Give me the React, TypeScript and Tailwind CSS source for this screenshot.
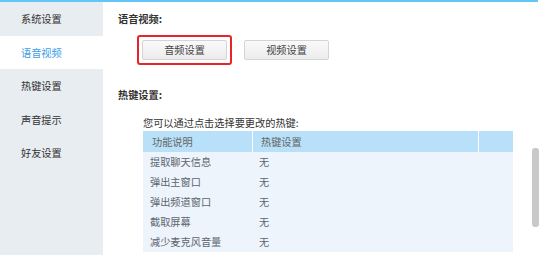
import React from 'react';

const font = { fontFamily: '"Noto Sans CJK SC", "Liberation Sans", sans-serif' };

const menu = ['系统设置', '语音视频', '热键设置', '声音提示', '好友设置'];

const rows = ['提取聊天信息', '弹出主窗口', '弹出频道窗口', '截取屏幕', '减少麦克风音量'];

export default function App() {
  return (
    <div className="relative w-[545px] h-[255px] overflow-hidden bg-white text-[10.2px]" style={font}>
      <div className="h-[2px] w-[538px] bg-[#62c6f6]" />
      <div className="flex h-[253px]">
        {/* left menu */}
        <div className="w-[103px] shrink-0 bg-[#e8edf1]">
          {menu.map((m, i) => (
            <div
              key={m}
              className={`h-[33.5px] flex items-center pl-[21px] ${
                i === 1 ? 'bg-white text-[#3d9de6]' : 'text-[#333]'
              }`}
            >
              {m}
            </div>
          ))}
        </div>

        {/* content */}
        <div className="flex-1 pl-[15px]">
          <div className="mt-[9px] h-[16px] leading-[16px] font-bold text-[#333]">语音视频:</div>
          <div className="mt-[8px] flex items-center">
            <div className="ml-[19px] rounded-[3px] border-2 border-[#e8232a] p-[3px]">
              <button className="w-[85px] h-[20px] rounded-[2px] border border-[#d4d4d4] bg-gradient-to-b from-[#fafafa] to-[#ececec] text-[10.2px] leading-[18px] text-[#444]">
                音频设置
              </button>
            </div>
            <button className="ml-[12px] w-[85px] h-[20px] rounded-[2px] border border-[#d4d4d4] bg-gradient-to-b from-[#fafafa] to-[#ececec] text-[10.2px] leading-[18px] text-[#444]">
              视频设置
            </button>
          </div>

          <div className="mt-[22px] h-[16px] leading-[16px] font-bold text-[#333]">热键设置:</div>

          <div className="ml-[25px] mt-[12px] h-[16px] leading-[16px] text-[#333]">您可以通过点击选择要更改的热键:</div>

          <div className="ml-[25px] w-[370px] bg-[#eef4fb]">
            <div className="flex h-[21px] bg-[#b8e0f8] text-[#666] leading-[21px]">
              <div className="w-[110px] pl-[9px] border-r border-white">功能说明</div>
              <div className="w-[226px] pl-[8px] border-r border-white">热键设置</div>
              <div className="flex-1" />
            </div>
            {rows.map((r) => (
              <div key={r} className="flex h-[20px] leading-[20px] text-[#5c6670]">
                <div className="w-[110px] pl-[7px]">{r}</div>
                <div className="pl-[6px]">无</div>
              </div>
            ))}
          </div>
        </div>
      </div>

      {/* scrollbar thumb */}
      <div className="absolute left-[532px] top-[148px] w-[7px] h-[79px] rounded-[3px] bg-[#c9c9c9]" />
    </div>
  );
}
